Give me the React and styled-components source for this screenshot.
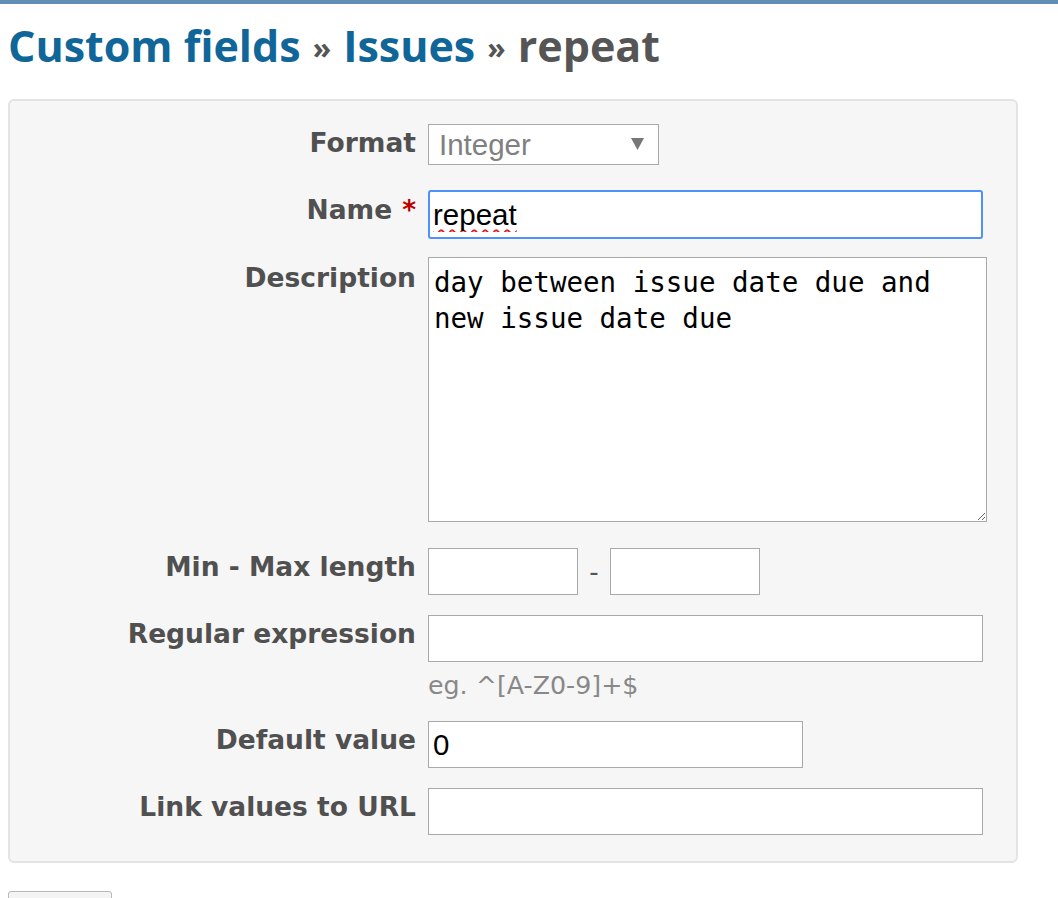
import React from "react";
import styled, { createGlobalStyle } from "styled-components";

const Global = createGlobalStyle`
  html, body {
    margin: 0;
    padding: 0;
    background: #ffffff;
    overflow: hidden;
  }
  body {
    font-family: "DejaVu Sans", Verdana, sans-serif;
    color: #505050;
  }
`;

const TopBar = styled.div`
  height: 4px;
  background: #628db6;
`;

const Content = styled.main`
  padding: 0 8px;
`;

const Title = styled.h2`
  margin: 0;
  padding: 14px 0 0 0;
  height: 95px;
  box-sizing: border-box;
  font-family: "Open Sans", "DejaVu Sans", sans-serif;
  font-weight: 700;
  font-size: 43px;
  line-height: 56px;
  color: #555555;
  white-space: nowrap;
`;

const Crumb = styled.a`
  color: #116699;
  text-decoration: none;
`;

const Sep = styled.span`
  color: #555555;
  font-size: 0.7em;
  margin: 0 0.4em;
  vertical-align: 0.1em;
`;

const Box = styled.section`
  width: 1010px;
  box-sizing: border-box;
  background: #f6f6f6;
  border: 2px solid #e4e4e4;
  border-radius: 6px;
  padding: 23px 0 0 0;
`;

const Row = styled.div`
  display: grid;
  grid-template-columns: 406px 1fr;
  column-gap: 12px;
  align-items: start;
  padding-bottom: ${(p) => p.$pb}px;
`;

const Label = styled.label`
  display: block;
  text-align: right;
  font-family: "DejaVu Sans", Verdana, sans-serif;
  font-weight: 700;
  font-size: 26.5px;
  line-height: 31px;
  padding-top: ${(p) => p.$top ?? 3}px;
  color: #505050;
  white-space: nowrap;
`;

const Required = styled.span`
  color: #bb0000;
  margin-left: 10px;
`;

const Field = styled.div`
  display: flex;
  flex-direction: column;
  align-items: flex-start;
`;

const SelectWrap = styled.div`
  position: relative;
  width: 231px;
  height: 41px;
`;

const Select = styled.select`
  appearance: none;
  -webkit-appearance: none;
  width: 100%;
  height: 100%;
  box-sizing: border-box;
  border: 1px solid #a9a9a9;
  border-radius: 0;
  background: #ffffff;
  color: #808080;
  font-family: "Liberation Sans", Arial, sans-serif;
  font-size: 29.5px;
  padding: 0 0 0 10px;
  opacity: 1;
`;

const Arrow = styled.svg`
  position: absolute;
  right: 15px;
  top: 14px;
  pointer-events: none;
`;

const TextInput = styled.input`
  box-sizing: border-box;
  width: ${(p) => p.$w}px;
  height: ${(p) => (p.$focused ? 49 : 47)}px;
  margin: 0;
  background: #ffffff;
  border: ${(p) => (p.$focused ? "2px solid #4d90fe" : "1px solid #a9a9a9")};
  border-radius: ${(p) => (p.$focused ? 3 : 0)}px;
  outline: none;
  padding: 0 ${(p) => (p.$focused ? 3 : 4)}px;
  font-family: "Liberation Sans", Arial, sans-serif;
  font-size: 29.5px;
  color: #000000;
  text-decoration: ${(p) => (p.$misspelled ? "underline wavy #e02020" : "none")};
  text-decoration-thickness: 2px;
  text-underline-offset: 4px;
  text-decoration-skip-ink: none;
`;

const TextArea = styled.textarea`
  box-sizing: border-box;
  width: 559px;
  height: 265px;
  margin: 0;
  display: block;
  border: 1px solid #a9a9a9;
  border-radius: 0;
  background: #ffffff;
  padding: 6px 5px;
  font-family: "DejaVu Sans Mono", "Liberation Mono", monospace;
  font-size: 27.5px;
  line-height: 36px;
  color: #000000;
  resize: both;
  outline: none;
`;

const RangeGroup = styled.div`
  display: flex;
  align-items: center;
  gap: 11px;
`;

const Dash = styled.span`
  font-family: "DejaVu Sans", Verdana, sans-serif;
  font-size: 26px;
  color: #555555;
  width: 10px;
  text-align: center;
`;

const Hint = styled.em`
  display: block;
  font-style: normal;
  font-family: "DejaVu Sans", Verdana, sans-serif;
  font-size: 25.3px;
  line-height: 28px;
  padding-top: 10px;
  color: #888888;
  white-space: nowrap;
`;

const Button = styled.button`
  display: block;
  margin-top: 28px;
  width: 104px;
  height: 44px;
  box-sizing: border-box;
  border: 1px solid #b8b8b8;
  border-radius: 3px;
  background: #f4f4f4;
`;

export default function App() {
  return (
    <>
      <Global />
      <TopBar />
      <Content>
        <Title>
          <Crumb href="#">Custom fields</Crumb>
          <Sep>»</Sep>
          <Crumb href="#">Issues</Crumb>
          <Sep>»</Sep>
          repeat
        </Title>
        <Box>
          <Row $pb={25}>
            <Label>Format</Label>
            <Field>
              <SelectWrap>
                <Select disabled defaultValue="int">
                  <option value="int">Integer</option>
                </Select>
                <Arrow width="13" height="12" viewBox="0 0 13 12">
                  <polygon points="0,0 13,0 6.5,12" fill="#777777" />
                </Arrow>
              </SelectWrap>
            </Field>
          </Row>
          <Row $pb={18}>
            <Label $top={4}>
              Name<Required>*</Required>
            </Label>
            <Field>
              <TextInput $w={555} $focused $misspelled defaultValue="repeat" />
            </Field>
          </Row>
          <Row $pb={26}>
            <Label $top={5}>Description</Label>
            <Field>
              <TextArea
                readOnly
                defaultValue="day between issue date due and new issue date due"
              />
            </Field>
          </Row>
          <Row $pb={20}>
            <Label>Min - Max length</Label>
            <Field>
              <RangeGroup>
                <TextInput $w={150} />
                <Dash>-</Dash>
                <TextInput $w={150} />
              </RangeGroup>
            </Field>
          </Row>
          <Row $pb={21}>
            <Label>Regular expression</Label>
            <Field>
              <TextInput $w={555} />
              <Hint>eg. ^[A-Z0-9]+$</Hint>
            </Field>
          </Row>
          <Row $pb={20}>
            <Label>Default value</Label>
            <Field>
              <TextInput $w={375} defaultValue="0" />
            </Field>
          </Row>
          <Row $pb={26}>
            <Label>Link values to URL</Label>
            <Field>
              <TextInput $w={555} />
            </Field>
          </Row>
        </Box>
        <Button type="submit" aria-label="Save" />
      </Content>
    </>
  );
}
